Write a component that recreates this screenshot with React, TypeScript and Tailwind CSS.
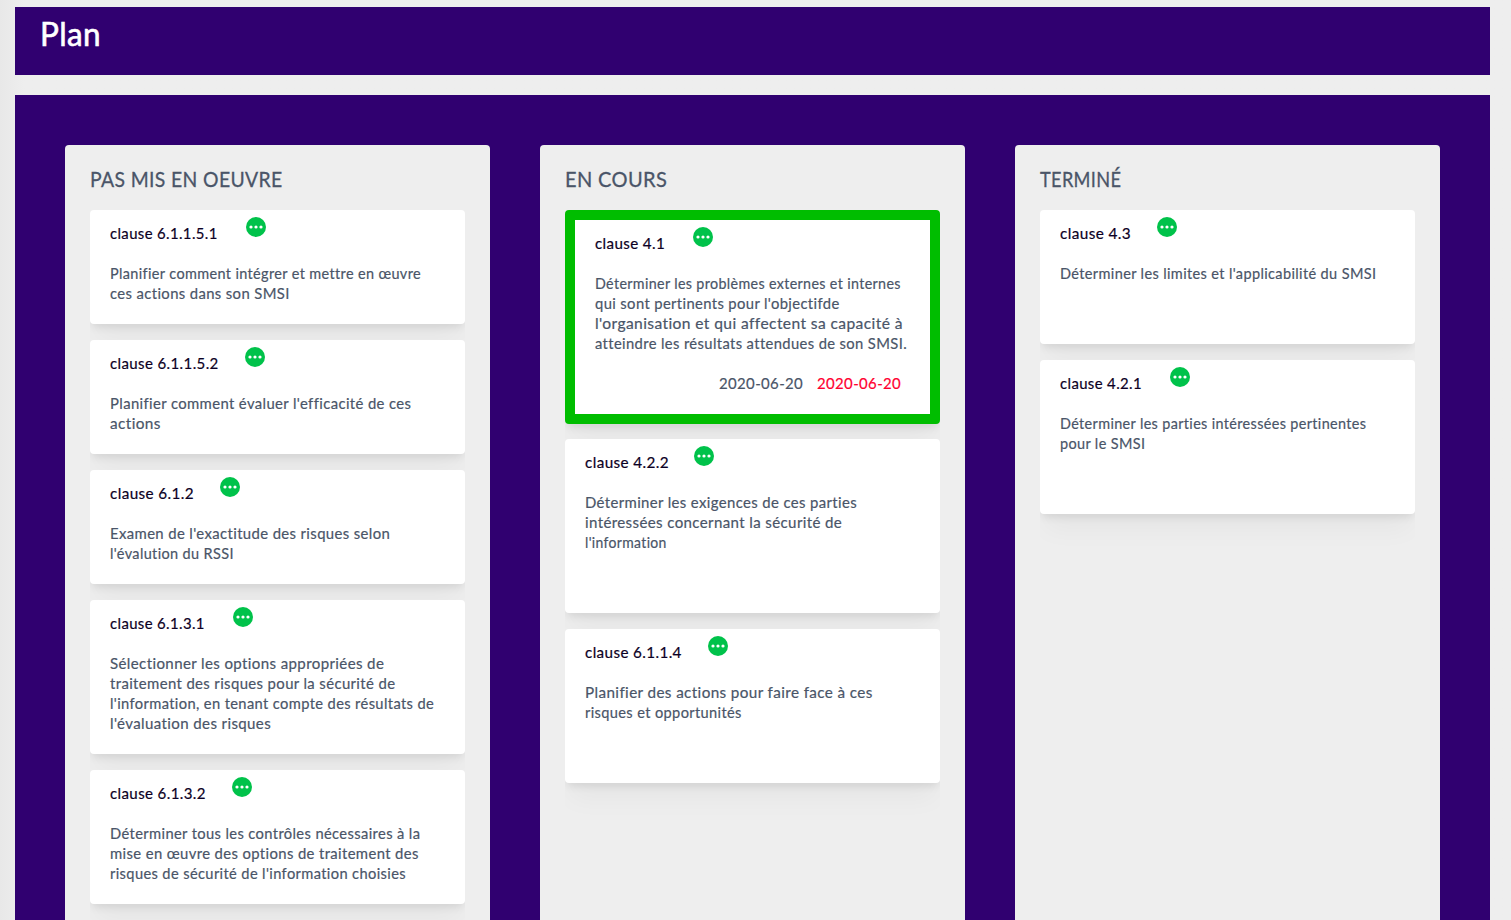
import { useLayoutEffect, useRef } from "react";

type Line = [text: string, width: number];

type Clause = {
  title: Line;
  iconOffset: number;
  lines: Line[];
  dates?: [string, string];
  active?: boolean;
};

type Column = { title: Line; showDates: boolean; clauses: Clause[] };

const columns: Column[] = [
  {
    title: ["PAS MIS EN OEUVRE", 192],
    showDates: false,
    clauses: [
      {
        title: ["clause 6.1.1.5.1", 107],
        iconOffset: 136,
        lines: [
          ["Planifier comment intégrer et mettre en œuvre", 310],
          ["ces actions dans son SMSI", 179],
        ],
      },
      {
        title: ["clause 6.1.1.5.2", 108],
        iconOffset: 135,
        lines: [
          ["Planifier comment évaluer l'efficacité de ces", 300],
          ["actions", 50],
        ],
      },
      {
        title: ["clause 6.1.2", 83],
        iconOffset: 109.5,
        lines: [
          ["Examen de l'exactitude des risques selon", 279],
          ["l'évalution du RSSI", 123],
        ],
      },
      {
        title: ["clause 6.1.3.1", 94],
        iconOffset: 123,
        lines: [
          ["Sélectionner les options appropriées de", 273],
          ["traitement des risques pour la sécurité de", 284],
          ["l'information, en tenant compte des résultats de", 323],
          ["l'évaluation des risques", 160],
        ],
      },
      {
        title: ["clause 6.1.3.2", 95],
        iconOffset: 122,
        lines: [
          ["Déterminer tous les contrôles nécessaires à la", 309],
          ["mise en œuvre des options de traitement des", 308],
          ["risques de sécurité de l'information choisies", 295],
        ],
      },
    ],
  },
  {
    title: ["EN COURS", 101],
    showDates: true,
    clauses: [
      {
        title: ["clause 4.1", 69],
        iconOffset: 98,
        active: true,
        dates: ["2020-06-20", "2020-06-20"],
        lines: [
          ["Déterminer les problèmes externes et internes", 305],
          ["qui sont pertinents pour l'objectifde", 244],
          ["l'organisation et qui affectent sa capacité à", 307],
          ["atteindre les résultats attendues de son SMSI.", 311],
        ],
      },
      {
        title: ["clause 4.2.2", 83],
        iconOffset: 109,
        lines: [
          ["Déterminer les exigences de ces parties", 271],
          ["intéressées concernant la sécurité de", 256],
          ["l'information", 81],
        ],
      },
      {
        title: ["clause 6.1.1.4", 96],
        iconOffset: 123,
        lines: [
          ["Planifier des actions pour faire face à ces", 287],
          ["risques et opportunités", 156],
        ],
      },
    ],
  },
  {
    title: ["TERMINÉ", 80],
    showDates: true,
    clauses: [
      {
        title: ["clause 4.3", 70],
        iconOffset: 97,
        lines: [["Déterminer les limites et l'applicabilité du SMSI", 315]],
      },
      {
        title: ["clause 4.2.1", 81],
        iconOffset: 110,
        lines: [
          ["Déterminer les parties intéressées pertinentes", 305],
          ["pour le SMSI", 84],
        ],
      },
    ],
  },
];

/* Condenses or widens a single line of text so that it spans the given width. */
function FitText({ text, width }: { text: string; width: number }) {
  const ref = useRef<HTMLSpanElement>(null);
  useLayoutEffect(() => {
    const el = ref.current;
    if (!el) return;
    el.style.transform = `scaleX(${(width + 1) / el.offsetWidth})`;
  }, [text, width]);
  return (
    <span className="block" style={{ width }}>
      <span ref={ref} className="inline-block origin-left whitespace-pre">
        {text}
      </span>
    </span>
  );
}

function MoreIcon() {
  return (
    <svg viewBox="0 0 20 20" className="-mt-[6px] size-5 shrink-0">
      <circle cx="10" cy="10" r="10" fill="#00c24a" />
      <circle cx="5" cy="10" r="1.6" fill="#fff" />
      <circle cx="10" cy="10" r="1.6" fill="#fff" />
      <circle cx="15" cy="10" r="1.6" fill="#fff" />
    </svg>
  );
}

function Card({ clause, showDates }: { clause: Clause; showDates: boolean }) {
  return (
    <article
      className={
        clause.active
          ? "-mb-px rounded border-10 border-[#00bd00] bg-white px-5 pt-[13px] pb-[21px] shadow-[0_20px_25px_-5px_rgba(0,0,0,0.04),0_5px_8px_-2px_rgba(0,0,0,0.09)]"
          : "rounded bg-white px-5 pt-[13px] pb-[21px] shadow-[0_20px_25px_-5px_rgba(0,0,0,0.04),0_5px_8px_-2px_rgba(0,0,0,0.09)]"
      }
    >
      <div className="flex h-5 items-start text-[#0c0024]">
        <h3 className="shrink-0" style={{ width: clause.iconOffset }}>
          <FitText text={clause.title[0]} width={clause.title[1]} />
        </h3>
        <MoreIcon />
      </div>
      <div className="mt-5">
        {clause.lines.map(([text, width]) => (
          <p key={text} className="h-5">
            <FitText text={text} width={width} />
          </p>
        ))}
      </div>
      {showDates && (
        <div className="mt-5 flex h-5 justify-end gap-[15px] pr-[10px]">
          {clause.dates && (
            <>
              <span>
                <FitText text={clause.dates[0]} width={83} />
              </span>
              <span className="text-[#ff0030]">
                <FitText text={clause.dates[1]} width={83} />
              </span>
            </>
          )}
        </div>
      )}
    </article>
  );
}

export default function App() {
  return (
    <div className="flex h-[920px] w-full flex-col overflow-hidden bg-[#eeeeee] bg-linear-to-r from-[#e8e8e8] to-[#eeeeee] to-[24px] pt-[7px] pr-[21px] pl-[15px] font-['Lato',sans-serif] text-base leading-5 tracking-[0.4px] text-[#4a5568] [-webkit-text-stroke:0.2px_currentColor]">
      <header className="h-[68px] shrink-0 bg-[#300070] pt-[7px] pl-[25px] text-[32px] leading-10 text-white [-webkit-text-stroke:0.6px_currentColor]">
        <h1>
          <FitText text="Plan" width={60} />
        </h1>
      </header>
      <main className="mt-5 flex min-h-0 flex-1 gap-[50px] bg-[#300070] px-[50px] pt-[50px]">
        {columns.map((column) => (
          <section
            key={column.title[0]}
            className="flex-1 overflow-hidden rounded-t bg-[#eeeeee] px-[25px] pt-[19px]"
          >
            <h2 className="mb-4 h-[30px] text-[22px] leading-[30px] [-webkit-text-stroke:0.3px_currentColor]">
              <FitText text={column.title[0]} width={column.title[1]} />
            </h2>
            <div className="flex flex-col gap-4 overflow-hidden pb-8">
              {column.clauses.map((clause) => (
                <Card key={clause.title[0]} clause={clause} showDates={column.showDates} />
              ))}
            </div>
          </section>
        ))}
      </main>
    </div>
  );
}
